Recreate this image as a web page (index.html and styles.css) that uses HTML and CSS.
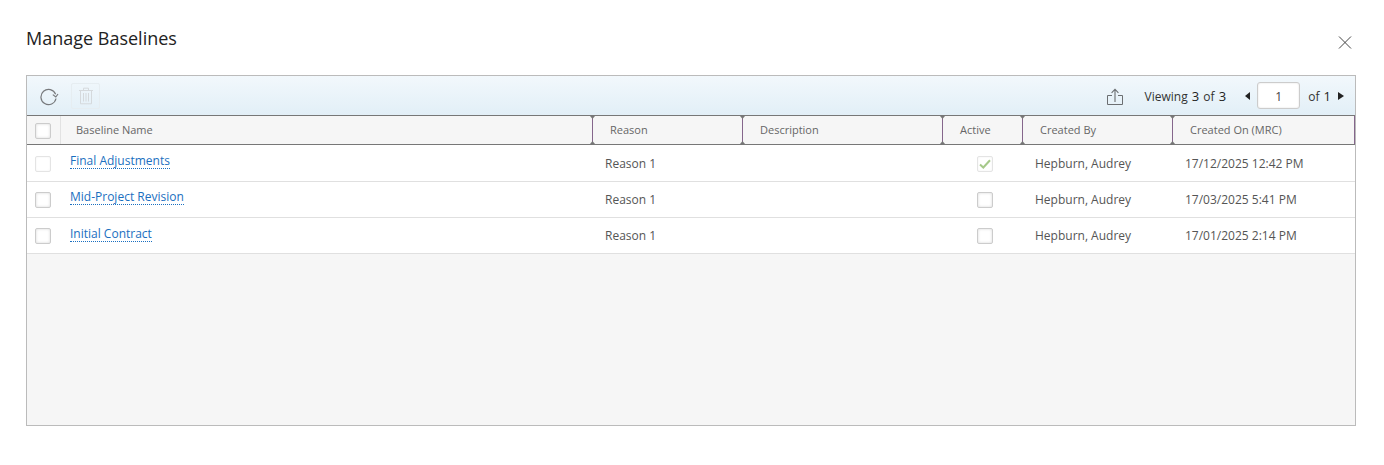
FILE: index.html
```html
<!DOCTYPE html>
<html lang="en">
<head>
<meta charset="utf-8">
<title>Manage Baselines</title>
<link rel="stylesheet" href="styles.css">
</head>
<body>
<div class="dialog">
  <header class="dialog-head">
    <h1 class="title">Manage Baselines</h1>
    <button class="close" aria-label="Close">
      <svg width="14" height="13" viewBox="0 0 14 13"><path d="M1 .5l12 12M13 .5l-12 12" fill="none" stroke="#444" stroke-width="1"/></svg>
    </button>
  </header>
  <section class="panel">
    <div class="toolbar">
      <div class="tool-refresh">
        <svg width="20" height="20" viewBox="0 0 20 20"><path d="M16.6 8.2A7.6 7.6 0 1 0 17 12.5" fill="none" stroke="#77797c" stroke-width="1.2"/><path d="M13.8 8.6l3 2.4 2.2-3" fill="none" stroke="#77797c" stroke-width="1.2"/></svg>
      </div>
      <div class="tool-delete">
        <svg width="16" height="18" viewBox="0 0 16 18"><path d="M1 3.500h14M5.500 3.500V1.200h5v2.300M2.500 3.500v13.300h11V3.500M5.500 6v8.500M8 6v8.500M10.500 6v8.500" fill="none" stroke="#d5d9dc" stroke-width="1"/></svg>
      </div>
      <div class="tool-right">
        <svg class="share" width="18" height="18" viewBox="0 0 18 18"><path d="M9 14V1.500M5.600 4.800L9 1.200l3.400 3.600" fill="none" stroke="#6b6e71" stroke-width="1.100"/><path d="M6 7.500H1.500v9h15v-9H12" fill="none" stroke="#6b6e71" stroke-width="1"/></svg>
        <span class="viewing">Viewing <span class="num">3</span> of <span class="num">3</span></span>
        <span class="arrow arrow-left"></span>
        <span class="page-input">1</span>
        <span class="of">of <span class="num">1</span></span>
        <span class="arrow arrow-right"></span>
      </div>
    </div>
    <div class="grid head">
      <div class="hcell hcheck"><span class="box"></span></div>
      <div class="hcell name">Baseline Name</div>
      <div class="hcell rs">Reason</div>
      <div class="hcell rs">Description</div>
      <div class="hcell rs">Active</div>
      <div class="hcell rs">Created By</div>
      <div class="hcell rs rs-end">Created On (MRC)</div>
    </div>
    <div class="grid row">
      <div class="cell check"><span class="box box-off"></span></div>
      <div class="cell link-cell"><a class="link" href="#">Final Adjustments</a></div>
      <div class="cell">Reason 1</div>
      <div class="cell"></div>
      <div class="cell active"><span class="box box-off">
        <svg width="12" height="10" viewBox="0 0 12 10"><path d="M1 5.500l3.300 3L11 1.200" fill="none" stroke="#a6c98a" stroke-width="2"/></svg>
      </span></div>
      <div class="cell">Hepburn, Audrey</div>
      <div class="cell">17/12/2025 12:42 PM</div>
    </div>
    <div class="grid row">
      <div class="cell check"><span class="box"></span></div>
      <div class="cell link-cell"><a class="link link-raised" href="#">Mid-Project Revision</a></div>
      <div class="cell">Reason 1</div>
      <div class="cell"></div>
      <div class="cell active"><span class="box"></span></div>
      <div class="cell">Hepburn, Audrey</div>
      <div class="cell">17/03/2025 5:41 PM</div>
    </div>
    <div class="grid row">
      <div class="cell check"><span class="box"></span></div>
      <div class="cell link-cell"><a class="link" href="#">Initial Contract</a></div>
      <div class="cell">Reason 1</div>
      <div class="cell"></div>
      <div class="cell active"><span class="box"></span></div>
      <div class="cell">Hepburn, Audrey</div>
      <div class="cell">17/01/2025 2:14 PM</div>
    </div>
  </section>
</div>
</body>
</html>
```
FILE: styles.css
```css
* { box-sizing: border-box; }
html, body { margin: 0; height: 100%; background: #fff; }
body { font-family: "Open Sans", sans-serif; font-size: 12px; color: #555; overflow: hidden; }
.dialog { padding: 0 28px 0 26px; }
.dialog-head { height: 75px; display: flex; justify-content: space-between; }
.title { margin: 0; padding-top: 26px; font-size: 18px; line-height: 25px; font-weight: 400; color: #222; }
.close { border: 0; padding: 0; background: none; width: 14px; height: 13px; margin: 36px 4px 0 0; display: flex; }
.panel { height: 351px; border: 1px solid #bbb; background: #f6f6f6; }
.toolbar { height: 39px; background: linear-gradient(#f2f8fc, #e2eff7); display: flex; align-items: center; padding: 0 11px 0 12px; }
.tool-refresh { width: 20px; height: 20px; display: flex; }
.tool-delete { width: 29px; height: 26px; margin-left: 12px; border: 1px solid #e6edf1; border-radius: 2px; display: flex; align-items: center; justify-content: center; }
.tool-right { margin-left: auto; display: flex; align-items: center; color: #333; }
.share { margin-right: 21px; margin-top: 2px; }
.viewing { margin-right: 18px; white-space: nowrap; }
.num { font-size: 13px; color: #222; margin: 0 1px; }
.arrow { width: 0; height: 0; border-top: 4.5px solid transparent; border-bottom: 4.5px solid transparent; }
.arrow-left { border-right: 5px solid #222; margin-right: 7px; }
.arrow-right { border-left: 6px solid #222; margin-left: 6px; }
.page-input { width: 43px; height: 27px; background: #fff; border: 1px solid #ccc; border-radius: 3px; box-shadow: inset 0 0 2px #ddd; text-align: center; line-height: 27px; color: #444; margin-right: 8px; }
.grid { display: grid; grid-template-columns: 34px 531px 150px 200px 80px 150px 183px; }
.head { height: 30px; background: #f6f6f6; border-top: 1px solid #777; border-bottom: 1px solid #777; }
.hcell { display: flex; align-items: center; font-size: 11px; color: #666; padding: 0 0 2px 17px; position: relative; }
.hcell.name { padding-left: 15px; }
.hcheck { padding: 2px 0 0 8px; border-right: 1px solid #e2e2e2; }
.rs { border-left: 1px solid #85668c; }
.rs-end { border-right: 1px solid #85668c; }
.rs::before, .rs::after { content: ""; position: absolute; left: -3px; width: 5px; height: 3px; background: #777; }
.rs::before { top: 0; clip-path: polygon(0 0, 100% 0, 50% 100%); }
.rs::after { bottom: 0; clip-path: polygon(50% 0, 100% 100%, 0 100%); }
.row { height: 36px; background: #fff; border-bottom: 1px solid #e0e0e0; }
.row:nth-of-type(3) { height: 37px; }
.cell { display: flex; align-items: center; padding-left: 13px; color: #555; }
.check { padding: 1px 0 0 8px; }
.link-cell { padding-left: 9px; }
.link { color: #1a6fc0; text-decoration: none; border-bottom: 1px dotted #1a6fc0; line-height: 15px; margin-top: -4px; }
.link-raised { margin-top: -6px; }
.active { padding: 1px 0 0 35px; }
.row:nth-of-type(3) .check, .row:nth-of-type(3) .active { padding-top: 2px; }
.box { width: 16px; height: 16px; display: flex; align-items: center; justify-content: center; background: #fff; border: 1px solid #ccc; border-radius: 2px; box-shadow: inset 0 0 3px #d8d8d8; }
.box-off { border-color: #e4e4e4; box-shadow: inset 0 0 2px #eee; }
```
